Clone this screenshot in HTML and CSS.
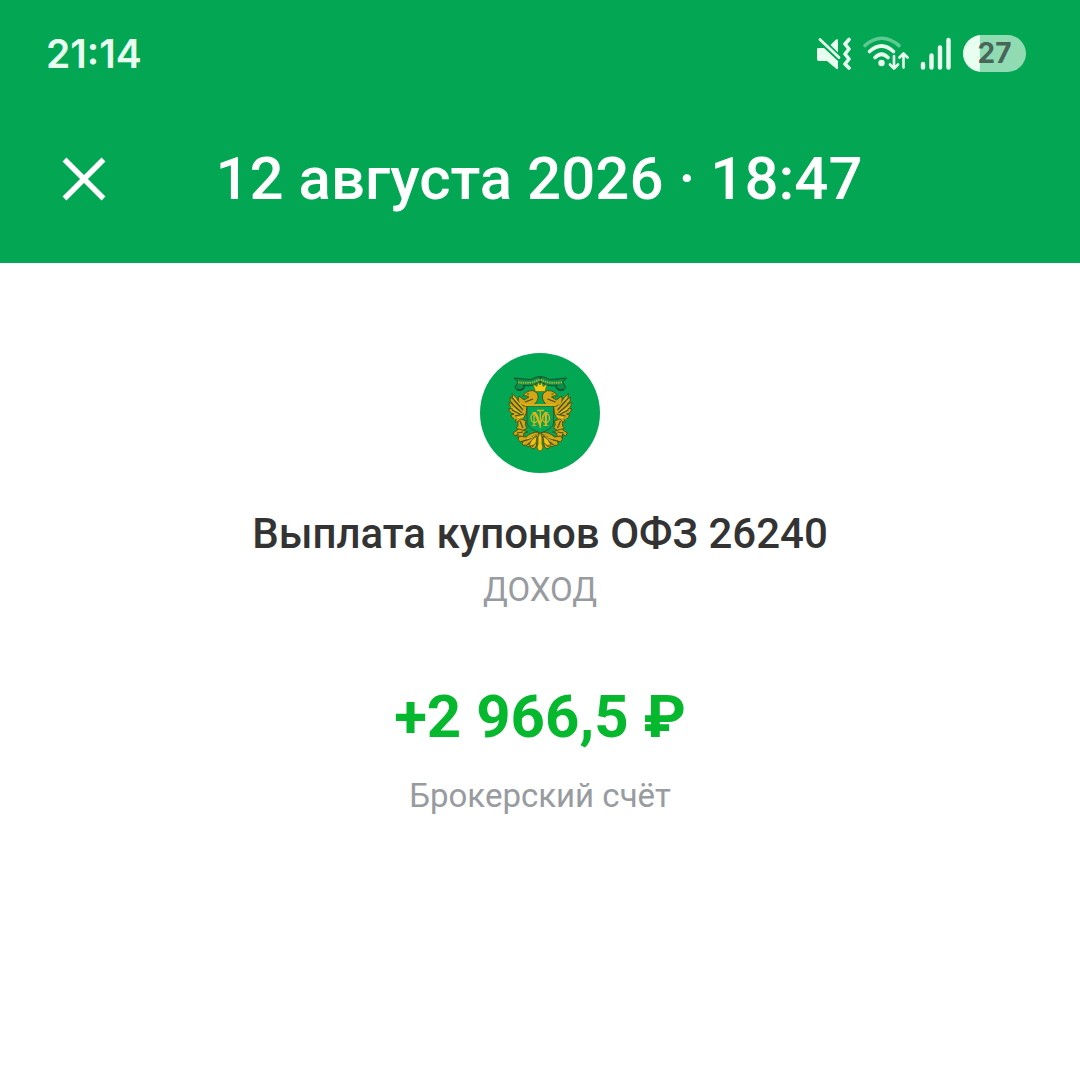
FILE: index.html
```html
<!DOCTYPE html>
<html lang="ru">
<head>
  <meta charset="UTF-8">
  <meta name="viewport" content="width=device-width, initial-scale=1.0">
  <title>Выплата купонов ОФЗ 26240</title>
  <link rel="stylesheet" href="styles.css">
</head>
<body>
  <header class="header">
    <div class="status-bar">
      <time class="clock">21:14</time>
      <div class="status-icons">
        <!-- звук выключен -->
        <svg class="icon-mute" width="36" height="34" viewBox="0 0 36 34" aria-hidden="true">
          <path d="M2 11H8L22 24V31Q22 33 20 31.500L11 24H3Q1 24 1 22V13Q1 11 2 11Z" fill="#e8fff0"/>
          <path d="M14.500 8L20 2.600Q22 1.500 22 3.500V15.500Z" fill="#e8fff0"/>
          <path d="M4 2.500L23 20.500" stroke="#e8fff0" stroke-width="2.800" stroke-linecap="round"/>
          <path d="M33 2.500L29 7L33 12L29 17L33 22L29 27L33 31" fill="none" stroke="#e8fff0" stroke-width="3.600" stroke-linecap="round" stroke-linejoin="round"/>
        </svg>
        <svg class="icon-wifi" width="46" height="36" viewBox="0 0 46 36" aria-hidden="true">
          <g fill="none" stroke="#e8fff0" stroke-width="3.600" stroke-linecap="round">
            <path d="M2 9.500Q18.500 -5 36 9.500" opacity=".4"/>
            <path d="M6.500 15.500Q18.500 4.500 30.500 15.500"/>
            <path d="M12 21.500Q18.500 15 25 21.500"/>
            <path d="M31 20V32M27 28.500L31 32.500L35 28.500M40.500 31.500V18M36.500 21.500L40.500 17.500L44.500 21.500" stroke-width="2.600" stroke-linejoin="round"/>
          </g>
          <circle cx="18.500" cy="27" r="3.200" fill="#e8fff0"/>
        </svg>
        <svg class="icon-signal" width="32" height="34" viewBox="0 0 32 34" aria-hidden="true">
          <path d="M3 27V30.500M11.500 18.500V30.500M20 10.500V30.500M28.500 3V30.500" stroke="#e8fff0" stroke-width="4.400" stroke-linecap="round"/>
        </svg>
        <span class="battery">27</span>
      </div>
    </div>
    <div class="toolbar">
      <button class="close" type="button" aria-label="Закрыть">
        <svg width="44" height="44" viewBox="0 0 44 44" aria-hidden="true">
          <path d="M2.500 2.500L41.500 41.500M41.500 2.500L2.500 41.500" stroke="#fff" stroke-width="5.500"/>
        </svg>
      </button>
      <h1 class="title">12 августа 2026 · 18:47</h1>
    </div>
  </header>

  <main class="operation">
    <svg class="logo" width="120" height="120" viewBox="0 0 120 120" role="img" aria-label="Министерство финансов">
      <defs>
        <!-- левая половина герба, правая рисуется отражением -->
        <g id="half">
          <g fill="#d5a615" stroke="#4c5614" stroke-width="1" stroke-linejoin="round">
            <path d="M47 52Q42 53 39 49Q37 44 32 40.500Q32 44 34 47L30 44Q29 48 33 51L29 49.500Q28 53 33 56L29 55.500Q29 60 34 61L31 62Q32 67 37 65L35 69Q40 70 43 66L46 61Z"/>
            <path d="M55 51Q60 45 57 40Q53 36 49 38Q45 39 43 43Q46 42 49 44L44 47L39 43Q37 49 41 52Q47 55 55 51Z"/>
            <path d="M41 66Q37 67 38 73L36 75L42 78L47 75Q44 72 46 68Z"/>
            <path d="M39 76L33 80L35 83L38 81L38 85L41 83L43 85L44 80L48 79Z"/>
            <path d="M59 79Q51 79 46 84L39 83Q37 87 40 89L43 88Q41 94 46 92Q47 95 50 93Q52 98 56 94Z"/>
          </g>
          <g fill="none" stroke="#3b4e1c" stroke-width="1.200">
            <path d="M34 47L43 57M32 51L42 60M32 57L42 62M35 63L44 61M40 68L43 75M37 80L43 79"/>
            <path d="M43 88Q50 87 57 81M47 92Q53 88 58 82M52 94Q56 89 59 83"/>
            <path d="M47 41H49M45 49L53 46"/>
          </g>
          <g fill="none" stroke="#f4d229" stroke-width=".8">
            <path d="M33 44L43 54M31 54L42 61M34 66L44 63M47 86Q53 85 57 81M50 92Q55 88 58 82"/>
          </g>
          <g fill="#0a8f49" stroke="#174e2a" stroke-width="1" stroke-linejoin="round">
            <path d="M60 23.500Q55 24 51 26.500Q43 26 34 25L38 29L35 34Q36 38 41 37L45 34L43 32.500Q49 33.500 53 32L60 29.500Z"/>
          </g>
          <path d="M37 36Q40 39 44 35" stroke="#174e2a" stroke-width="1.500" fill="none"/>
        </g>
      </defs>
      <circle cx="60" cy="60" r="60" fill="#02a653"/>
      <use href="#half"/>
      <use href="#half" transform="translate(120.500 0) scale(-1 1)"/>
      <path d="M38 29.200Q46 30.500 53 29.200L60 26.500L67 29.200Q74 30.500 82 29.200" fill="none" stroke="#a5b83a" stroke-width="2" stroke-dasharray="1.500 .8"/>
      <path d="M55.500 38.500L53 31L57 33.500L58 29L60 32L62 29L63 33.500L67 31L65 38.500Z" fill="#f0ca19" stroke="#5c6512" stroke-width=".6"/>
      <!-- щит с вензелем -->
      <path d="M47 53H73.500V70Q73 76 60.500 80Q48 76 47 70Z" fill="#02a653" stroke="#3c5524" stroke-width="1"/>
      <path d="M45 52H75.500" stroke="#e2b51a" stroke-width="1.800"/>
      <text class="monogram" x="60" y="73">М</text>
      <g fill="none" stroke="#dcb51d" stroke-width="1.300">
        <ellipse cx="54.500" cy="65" rx="3.500" ry="4.500"/>
        <ellipse cx="66" cy="65" rx="3.500" ry="4.500"/>
        <path d="M60.300 57V75M57 57.500H64"/>
      </g>
      <g fill="#f0c41a" stroke="#4c5614" stroke-width=".8">
        <path d="M60 79Q57 84 58 91L57 94Q57 98 60 98Q63 98 63 94L62 91Q63 84 60 79Z"/>
        <path d="M57 83Q51 86 49 92Q53 94 56 90Z"/>
        <path d="M63 83Q69 86 71 92Q67 94 64 90Z"/>
      </g>
    </svg>
    <h2 class="name">Выплата купонов ОФЗ 26240</h2>
    <p class="note">ДОХОД</p>
    <p class="amount">+2 966,5 ₽</p>
    <p class="note">Брокерский счёт</p>
  </main>
</body>
</html>
```
FILE: styles.css
```css
:root {
  --primary-color: #02a653;
  --accent-color: #06b82d;
  --text-color: #333;
  --text-muted: #989ba0;
  --status-color: #e8fff0;
}
* { box-sizing: border-box; }
body {
  font-family: Roboto, sans-serif;
  background: #fff;
  color: var(--text-color);
  margin: 0;
}
h1, h2, p { margin: 0; }
.header {
  background: var(--primary-color);
  color: #fff;
  padding: 32px 54px 49px 46px;
}
.status-bar {
  display: flex;
  align-items: center;
  justify-content: space-between;
  height: 43px;
  color: var(--status-color);
}
.clock { font: 600 39px/42px Inter, sans-serif; }
.status-icons { display: flex; align-items: center; gap: 11px; }
.battery {
  width: 63px;
  height: 37px;
  border-radius: 19px;
  background: linear-gradient(to right, var(--status-color) 27%, #90dbb2 27%);
  color: #48655a;
  font: 700 28px/36px Inter, sans-serif;
  text-align: center;
}
.toolbar {
  display: grid;
  grid-template-columns: 76px 1fr 70px;
  align-items: center;
  margin-top: 69px;
}
.close { width: 76px; height: 70px; padding: 0; border: none; background: none; cursor: pointer; }
.close svg { display: block; margin: 0 auto; }
.title { font-size: 60px; line-height: 70px; font-weight: 500; text-align: center; }
.operation {
  display: flex;
  flex-direction: column;
  align-items: center;
  padding: 90px 24px;
  text-align: center;
}
.logo { margin-bottom: 36px; }
.monogram {
  font: 20px "Liberation Serif", serif;
  fill: #e1b51b;
  text-anchor: middle;
}
.name { font-size: 42px; line-height: 50px; font-weight: 500; }
.note { font-size: 33px; line-height: 40px; margin-top: 11px; color: var(--text-muted); }
.amount { font-size: 60px; line-height: 70px; font-weight: 700; margin-top: 72px; color: var(--accent-color); }
.amount + .note { margin-top: 24px; }
```
